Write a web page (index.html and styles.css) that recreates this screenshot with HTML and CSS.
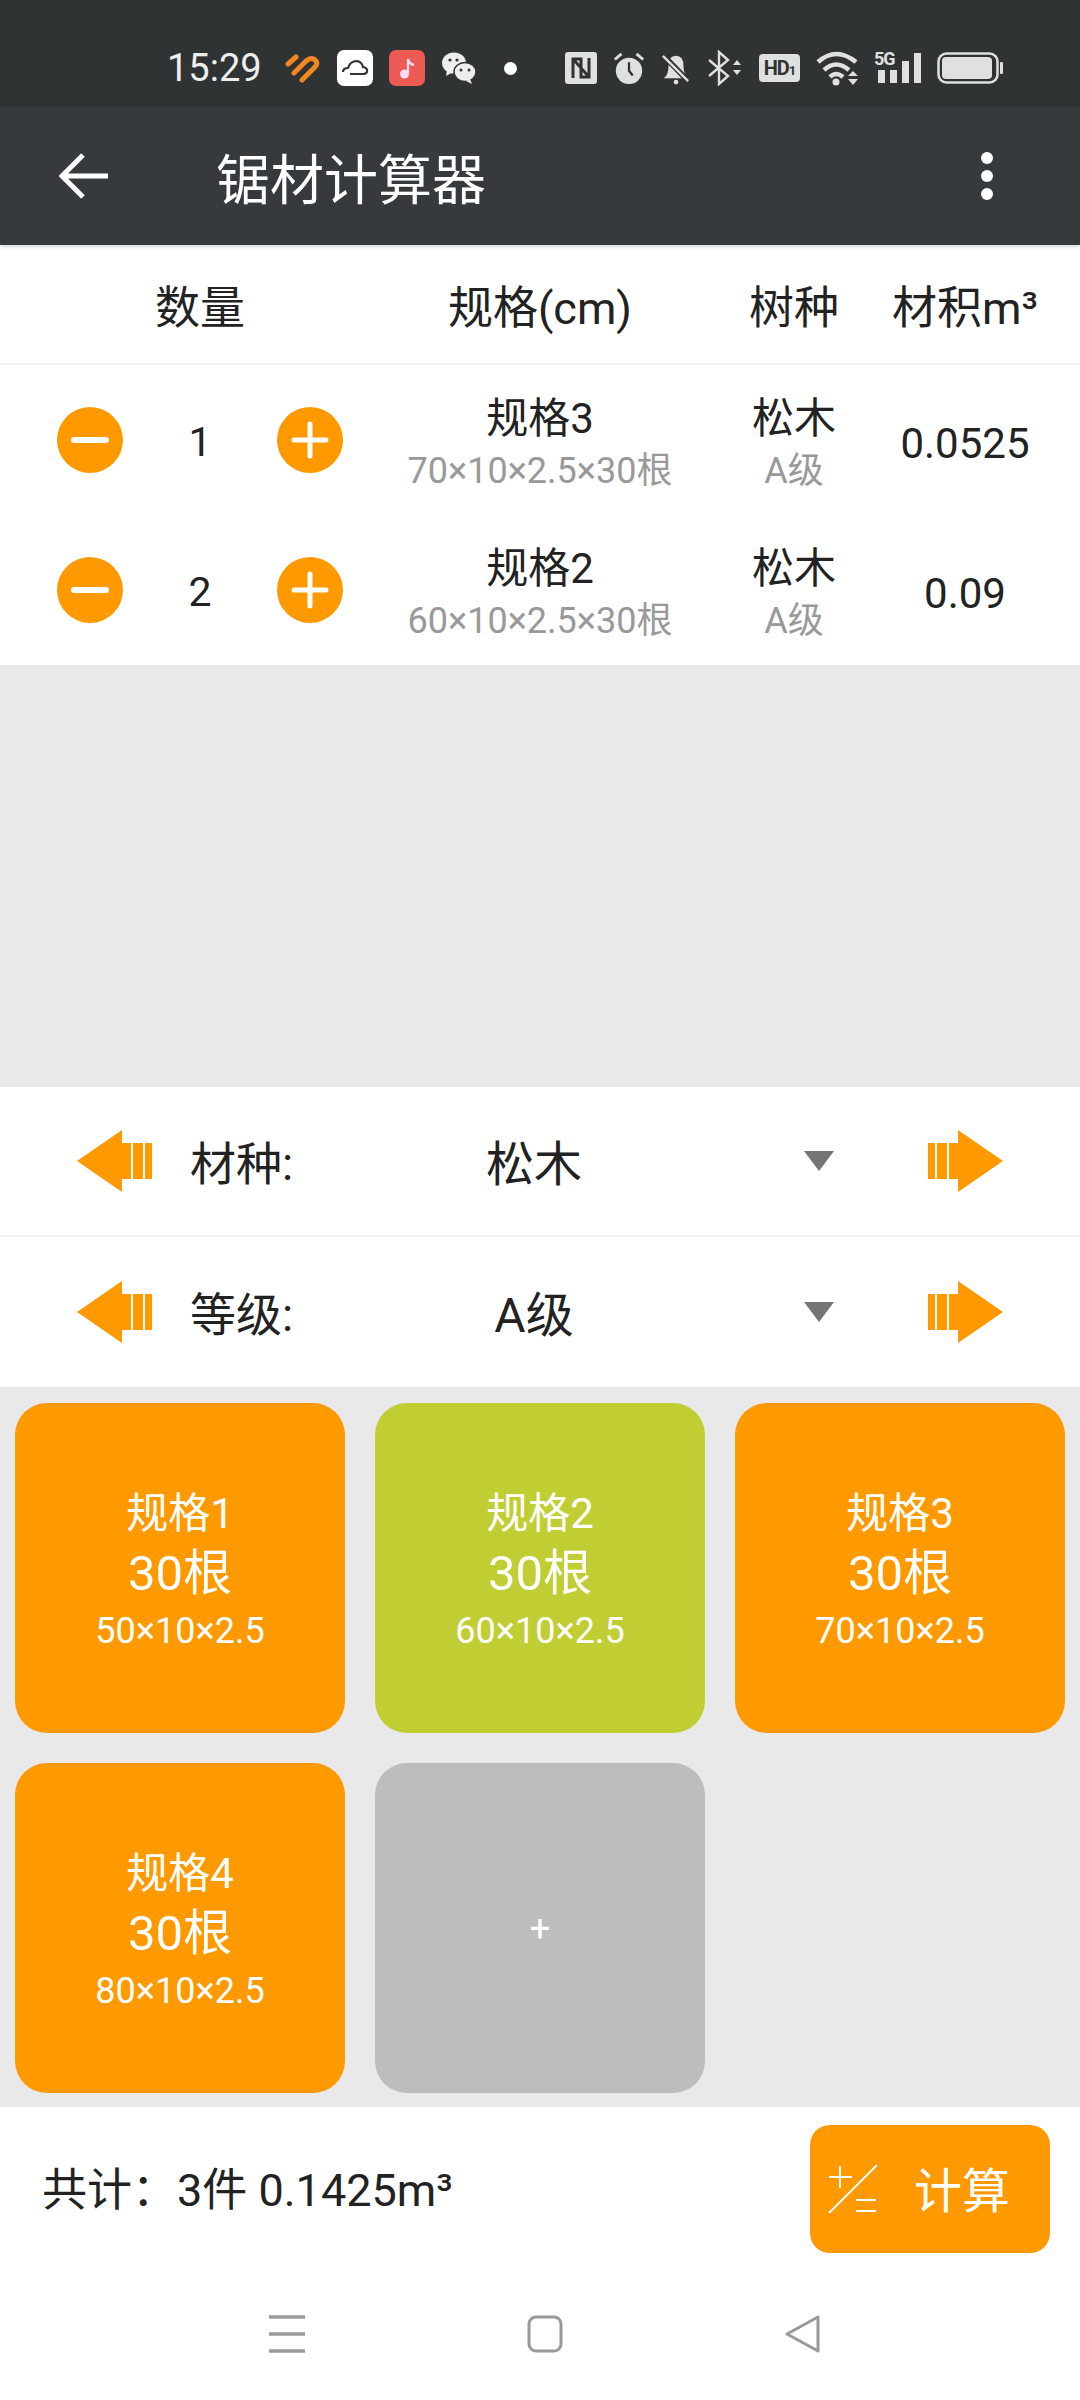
FILE: index.html
```html
<!DOCTYPE html>
<html lang="zh-CN">
<head>
  <meta charset="UTF-8" />
  <meta name="viewport" content="width=device-width,initial-scale=1.0" />
  <title>锯材计算器</title>
  <link rel="stylesheet" href="styles.css">
</head>
<body>
  <div class="status-bar">
    <span class="time">15:29</span>
    <svg class="st" width="36" height="30" viewBox="0 0 36 30"><path d="M3 11 L11 4 M9 20 L21 8 Q27 3 31 8 Q33 11 30 14 L17 27" fill="none" stroke="#f5871f" stroke-width="5" stroke-linecap="round"/></svg>
    <svg class="st" width="36" height="36" viewBox="0 0 36 36"><rect width="36" height="36" rx="7" fill="#fff"/><path d="M6 22 Q6 18 11 18 Q13 11 20 11 Q25 12 26 17 Q31 18 30 22 Q29 24 26 24 L13 24" fill="none" stroke="#333" stroke-width="2.2"/></svg>
    <svg class="st" width="36" height="36" viewBox="0 0 36 36"><rect width="36" height="36" rx="7" fill="#ec5a53"/><path d="M19 9 L19 23" stroke="#fde" stroke-width="2.4"/><circle cx="15.500" cy="24" r="4.500" fill="#fde"/><path d="M19 9 Q20 14 25 15" fill="none" stroke="#fde" stroke-width="2.4"/></svg>
    <svg class="st" width="36" height="34" viewBox="0 0 36 34"><ellipse cx="13" cy="12" rx="12" ry="10.500" fill="#eee"/><path d="M6 19 L5 25 L12 21Z" fill="#eee"/><ellipse cx="24" cy="21" rx="11" ry="9.500" fill="#eee" stroke="#303333" stroke-width="1.500"/><path d="M29 28 L31 33 L25 30Z" fill="#eee"/><circle cx="9" cy="9" r="1.600" fill="#303333"/><circle cx="16" cy="9" r="1.600" fill="#303333"/><circle cx="20" cy="19" r="1.500" fill="#303333"/><circle cx="28" cy="19" r="1.500" fill="#303333"/></svg>
    <span class="dot"></span>
    <svg class="st" width="32" height="32" viewBox="0 0 32 32"><rect width="32" height="32" rx="3" fill="#dfe1e0"/><path d="M8 26 V7 L16 7 V16 M24 6 V25 L16 25 V16 M8 7 L24 25" fill="none" stroke="#303333" stroke-width="3"/></svg>
    <svg class="st" width="32" height="36" viewBox="0 0 34 36"><circle cx="17" cy="21" r="14" fill="#dfe1e0"/><path d="M17 12 V21 L21 26" fill="none" stroke="#303333" stroke-width="2.400"/><path d="M2 9 L9 3 M32 9 L25 3" stroke="#dfe1e0" stroke-width="3"/></svg>
    <svg class="st" width="30" height="34" viewBox="0 0 32 36"><path d="M3 29 Q8 25 8 16 Q8 5 16 5 Q24 5 24 16 Q24 25 29 29Z" fill="#dfe1e0"/><circle cx="16" cy="33" r="2.500" fill="#dfe1e0"/><path d="M2 4 L30 33" stroke="#303333" stroke-width="6"/><path d="M2 5 L29 32" stroke="#dfe1e0" stroke-width="2.500"/></svg>
    <svg class="st" width="36" height="36" viewBox="0 0 36 36"><path d="M2 10 L21 26 L12 34 V2 L21 10 L2 26" fill="none" stroke="#dfe1e0" stroke-width="2.400"/><path d="M26 15 L30 10 L34 15Z M26 20 L30 25 L34 20Z" fill="#dfe1e0"/></svg>
    <span class="hd">HD<small>1</small></span>
    <svg class="st" width="46" height="36" viewBox="0 0 46 36"><path d="M2 12 Q20 -4 40 12 M8 20 Q20 9 33 20 M14 27 Q20 21 27 27" fill="none" stroke="#dfe1e0" stroke-width="4.500"/><circle cx="20" cy="32" r="3.500" fill="#dfe1e0"/><path d="M32 26 L37 21 L42 26Z M32 29 L37 35 L42 29Z" fill="#dfe1e0"/></svg>
    <span class="signal"><span class="five-g">5G</span><svg width="47" height="30" viewBox="0 0 47 30"><rect x="4" y="17" width="7" height="13" fill="#dfe1e0"/><rect x="16" y="17" width="7" height="13" fill="#dfe1e0"/><rect x="28" y="8" width="7" height="22" fill="#dfe1e0"/><rect x="40" y="0" width="7" height="30" fill="#dfe1e0"/></svg></span>
    <svg class="st" width="66" height="32" viewBox="0 0 66 32"><rect x="1.500" y="1.500" width="59" height="29" rx="8" fill="none" stroke="#dfe1e0" stroke-width="2.500"/><rect x="5" y="5" width="50" height="22" rx="4" fill="#dfe1e0"/><rect x="63" y="10" width="3" height="12" rx="1" fill="#dfe1e0"/></svg>
  </div>

  <header class="toolbar">
    <svg class="back" width="52" height="48" viewBox="0 0 52 48"><path d="M49 24 H4 M24 3 L3 24 L24 45" fill="none" stroke="#fff" stroke-width="5"/></svg>
    <h1>锯材计算器</h1>
    <span class="more"><i></i><i></i><i></i></span>
  </header>

  <div class="table-head">
    <div class="col-qty">数量</div>
    <div class="col-spec">规格(cm)</div>
    <div class="col-wood">树种</div>
    <div class="col-vol">材积m³</div>
  </div>

  <section class="rows">
    <div class="row">
      <div class="col-qty stepper">
        <svg class="round" width="66" height="66" viewBox="0 0 66 66"><circle cx="33" cy="33" r="33" fill="#ff9900"/><path d="M17 33 H49" stroke="#fff" stroke-width="6" stroke-linecap="round"/></svg>
        <span class="count">1</span>
        <svg class="round" width="66" height="66" viewBox="0 0 66 66"><circle cx="33" cy="33" r="33" fill="#ff9900"/><path d="M17 33 H49 M33 17 V49" stroke="#fff" stroke-width="5" stroke-linecap="round"/></svg>
      </div>
      <div class="col-spec cell"><div class="main">规格3</div><div class="sub">70×10×2.5×30根</div></div>
      <div class="col-wood cell"><div class="main">松木</div><div class="sub">A级</div></div>
      <div class="col-vol value">0.0525</div>
    </div>
    <div class="row">
      <div class="col-qty stepper">
        <svg class="round" width="66" height="66" viewBox="0 0 66 66"><circle cx="33" cy="33" r="33" fill="#ff9900"/><path d="M17 33 H49" stroke="#fff" stroke-width="6" stroke-linecap="round"/></svg>
        <span class="count">2</span>
        <svg class="round" width="66" height="66" viewBox="0 0 66 66"><circle cx="33" cy="33" r="33" fill="#ff9900"/><path d="M17 33 H49 M33 17 V49" stroke="#fff" stroke-width="5" stroke-linecap="round"/></svg>
      </div>
      <div class="col-spec cell"><div class="main">规格2</div><div class="sub">60×10×2.5×30根</div></div>
      <div class="col-wood cell"><div class="main">松木</div><div class="sub">A级</div></div>
      <div class="col-vol value">0.09</div>
    </div>
  </section>

  <div class="empty"></div>

  <section class="pickers">
    <div class="picker">
      <svg class="arrow" width="76" height="66" viewBox="0 0 76 66"><path d="M1 33 L46 2 V15 H55 V51 H46 V64Z M57 15 H67 V51 H57Z M69 15 H76 V51 H69Z" fill="#ff9900"/></svg>
      <span class="picker-label">材种:</span>
      <span class="picker-value">松木</span>
      <span class="caret"></span>
      <svg class="arrow" width="76" height="66" viewBox="0 0 76 66"><path d="M75 33 L30 2 V15 H21 V51 H30 V64Z M19 15 H9 V51 H19Z M7 15 H0 V51 H7Z" fill="#ff9900"/></svg>
    </div>
    <div class="picker">
      <svg class="arrow" width="76" height="66" viewBox="0 0 76 66"><path d="M1 33 L46 2 V15 H55 V51 H46 V64Z M57 15 H67 V51 H57Z M69 15 H76 V51 H69Z" fill="#ff9900"/></svg>
      <span class="picker-label">等级:</span>
      <span class="picker-value">A级</span>
      <span class="caret"></span>
      <svg class="arrow" width="76" height="66" viewBox="0 0 76 66"><path d="M75 33 L30 2 V15 H21 V51 H30 V64Z M19 15 H9 V51 H19Z M7 15 H0 V51 H7Z" fill="#ff9900"/></svg>
    </div>
  </section>

  <section class="cards">
    <div class="card"><div class="card-name">规格1</div><div class="card-num">30根</div><div class="card-size">50×10×2.5</div></div>
    <div class="card selected"><div class="card-name">规格2</div><div class="card-num">30根</div><div class="card-size">60×10×2.5</div></div>
    <div class="card"><div class="card-name">规格3</div><div class="card-num">30根</div><div class="card-size">70×10×2.5</div></div>
    <div class="card"><div class="card-name">规格4</div><div class="card-num">30根</div><div class="card-size">80×10×2.5</div></div>
    <div class="card add">+</div>
  </section>

  <footer class="total-bar">
    <div class="total">共计：3件 0.1425m³</div>
    <div class="calc-btn">
      <svg width="50" height="50" viewBox="0 0 50 50"><path d="M1 49 L49 1 M1 13 H24 M12 2 V24 M28 36 H48 M28 47 H48" fill="none" stroke="#fff" stroke-width="2"/></svg>
      <span>计算</span>
    </div>
  </footer>

  <nav class="nav-bar">
    <svg width="36" height="38" viewBox="0 0 36 38"><path d="M0 2 H36 M0 19 H36 M0 36 H36" stroke="#999" stroke-width="3.500"/></svg>
    <svg width="36" height="38" viewBox="0 0 36 38"><rect x="2" y="2" width="32" height="34" rx="7" fill="none" stroke="#999" stroke-width="3"/></svg>
    <svg width="36" height="38" viewBox="0 0 36 38"><path d="M33 2 V36 L2 19Z" fill="none" stroke="#999" stroke-width="3" stroke-linejoin="round"/></svg>
  </nav>
</body>
</html>
```

FILE: styles.css
```css
* {
  box-sizing: border-box;
}
html, body {
  margin: 0;
  padding: 0;
}
body {
  width: 1080px;
  height: 2400px;
  overflow: hidden;
  background: #fff;
  color: #222;
  font-family: Roboto, "Noto Sans CJK SC", sans-serif;
  display: flex;
  flex-direction: column;
}
.status-bar {
  height: 107px;
  flex: none;
  background: #303333;
  display: flex;
  align-items: center;
  gap: 16px;
  padding: 29px 0 0 167px;
  color: #eee;
}
.time {
  font-size: 38px;
  width: 102px;
}
.st {
  flex: none;
}
.dot {
  width: 13px;
  height: 13px;
  border-radius: 50%;
  background: #fff;
  margin: 0 32px 0 11px;
}
.hd {
  width: 41px;
  height: 28px;
  background: #dfe1e0;
  color: #303333;
  border-radius: 4px;
  font-size: 20px;
  font-weight: 700;
  line-height: 28px;
  text-align: center;
  letter-spacing: -1px;
}
.hd small {
  font-size: 13px;
}
.signal {
  position: relative;
  margin-left: -4px;
  display: flex;
}
.five-g {
  position: absolute;
  left: 0;
  top: -3px;
  font-size: 18px;
  line-height: 18px;
  font-weight: 700;
  color: #dfe1e0;
  letter-spacing: -1px;
}
.toolbar {
  height: 138px;
  flex: none;
  background: #373a3d;
  color: #fff;
  display: flex;
  align-items: center;
  padding-left: 59px;
  box-shadow: 0 2px 3px rgba(0,0,0,0.15);
}
.toolbar h1 {
  margin: 0 0 0 105px;
  font-size: 54px;
  font-weight: 400;
  flex: 1;
}
.back {
  flex: none;
}
.more {
  display: flex;
  flex-direction: column;
  gap: 6px;
  margin-right: 87px;
}
.more i {
  display: block;
  width: 12px;
  height: 12px;
  border-radius: 50%;
  background: #fff;
}
.table-head {
  height: 120px;
  flex: none;
  display: flex;
  align-items: center;
  font-size: 45px;
  text-align: center;
  border-bottom: 2px solid #f0f0f0;
}
.col-qty {
  width: 400px;
  flex: none;
}
.col-spec {
  width: 280px;
  flex: none;
  text-align: center;
}
.col-wood {
  width: 170px;
  padding-left: 58px;
  flex: none;
  text-align: center;
}
.col-vol {
  flex: 1;
  text-align: center;
  white-space: nowrap;
}
.rows {
  flex: none;
}
.row {
  height: 150px;
  display: flex;
  align-items: center;
}
.stepper {
  display: flex;
  align-items: center;
  justify-content: space-between;
  padding: 0 57px;
}
.count {
  font-size: 41px;
  padding-top: 4px;
}
.cell {
  padding-top: 10px;
}
.main {
  font-size: 42px;
  line-height: 52px;
}
.sub {
  font-size: 36px;
  line-height: 52px;
  color: #999;
  white-space: nowrap;
}
.value {
  font-size: 42px;
  padding-top: 6px;
}
.empty {
  height: 422px;
  flex: none;
  background: #e9e9e9;
}
.picker {
  height: 150px;
  display: flex;
  align-items: center;
  padding: 0 76px;
  border-bottom: 2px solid #f0f0f0;
}
.picker:last-child {
  border-bottom: none;
}
.arrow {
  flex: none;
}
.arrow:last-child {
  margin-left: auto;
}
.picker-label {
  font-size: 46px;
  margin-left: 38px;
  width: 130px;
  padding-bottom: 2px;
  white-space: nowrap;
}
.picker-value {
  width: 300px;
  font-size: 48px;
  text-align: center;
  margin-left: 64px;
  padding-bottom: 2px;
}
.caret {
  width: 0;
  height: 0;
  border-left: 15px solid transparent;
  border-right: 15px solid transparent;
  border-top: 20px solid #757575;
  margin-left: 120px;
}
.cards {
  height: 720px;
  flex: none;
  background: #e9e9e9;
  display: grid;
  grid-template-columns: repeat(3, 330px);
  grid-auto-rows: 330px;
  gap: 30px;
  padding: 16px 15px 15px;
}
.card {
  background: #ff9900;
  color: #fff;
  border-radius: 32px;
  display: flex;
  flex-direction: column;
  align-items: center;
  justify-content: center;
  text-align: center;
  padding-top: 5px;
}
.card.selected {
  background: #c0ce33;
}
.card.add {
  background: #bdbdbd;
  font-size: 36px;
  padding-top: 2px;
}
.card-name {
  font-size: 42px;
  line-height: 60px;
}
.card-num {
  font-size: 49px;
  line-height: 60px;
}
.card-size {
  font-size: 36px;
  line-height: 54px;
}
.total-bar {
  height: 163px;
  flex: none;
  display: flex;
  align-items: center;
  justify-content: space-between;
  padding: 0 30px 0 42px;
}
.total {
  font-size: 45px;
  padding-bottom: 4px;
}
.calc-btn {
  width: 240px;
  height: 128px;
  background: #ff9900;
  color: #fff;
  border-radius: 20px;
  display: flex;
  align-items: center;
  padding-left: 18px;
  gap: 36px;
  font-size: 48px;
}
.calc-btn span {
  padding-bottom: 4px;
}
.nav-bar {
  flex: 1;
  display: flex;
  align-items: flex-start;
  justify-content: space-between;
  padding: 45px 259px 0 269px;
}
```
